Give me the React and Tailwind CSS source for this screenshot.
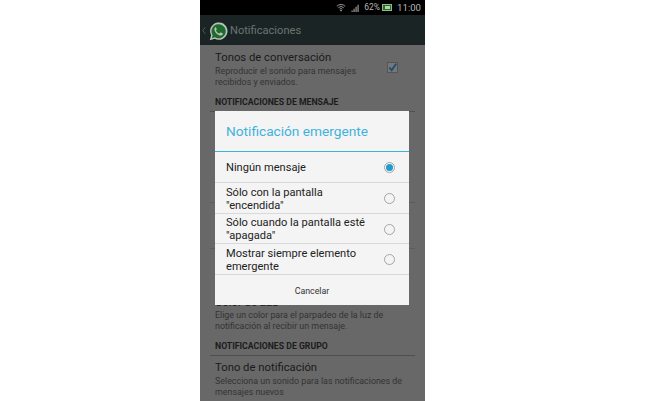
import React from "react";

const font = { fontFamily: "Roboto, sans-serif" };

const options = [
  { label: ["Ningún mensaje"], checked: true, h: "h-[31px]" },
  { label: ["Sólo con la pantalla", "\"encendida\""], h: "h-[31px] pt-[1px]" },
  { label: ["Sólo cuando la pantalla esté", "\"apagada\""], h: "h-[30px] pt-[1px]" },
  { label: ["Mostrar siempre elemento", "emergente"], h: "h-[31px] pt-[1px]" },
];

const Radio = ({ checked }) => (
  <span className="flex h-[11px] w-[11px] shrink-0 items-center justify-center rounded-full border border-[#a5a5a5] bg-[#f4f4f4]">
    {checked && <span className="h-[7px] w-[7px] rounded-full bg-[#1f9bd1]" />}
  </span>
);

const Logo = () => (
  <svg viewBox="0 0 24 24" className="h-[19px] w-[19px] shrink-0">
    <path d="M1 23l1.7-6.2A11 11 0 1 1 7.1 21.2z" fill="#b9c4b9" />
    <path d="M3.6 20.4l1-3.8A9 9 0 1 1 7.5 19.4z" fill="#1f6a2e" />
    <path d="M8.2 6.7c-.6.2-1.4 1.2-1.4 2.4 0 3.4 4.4 8 8.3 8 1.2 0 2.2-1 2.3-1.8.1-.5 0-.8-.3-1l-2.2-1.1c-.3-.1-.5 0-.7.2l-.9 1.1c-.2.2-.4.2-.7.1-1.4-.6-3-2-3.7-3.5-.1-.2-.1-.4.1-.6l.7-.9c.1-.2.2-.4.1-.6l-1-2.3c-.1-.3-.6-.2-.8 0z" fill="#b9c4b9" />
  </svg>
);

const Section = ({ children }) => (
  <div className="mx-[10px] border-b border-[#4f4f4f] px-[5px] pb-[3px] text-[8.7px] font-bold leading-[11px] text-[#1c1c1c]">
    {children}
  </div>
);

export default function App() {
  return (
    <div className="flex h-[401px] w-[664px] overflow-hidden bg-white pl-[200px]" style={font}>
      <div className="relative flex h-full w-[225px] flex-col overflow-hidden bg-[#686868]">
        {/* status bar */}
        <div className="flex h-[15px] shrink-0 items-center justify-end gap-[2px] bg-black pr-[4px] text-[#b5b5b5]">
          <svg viewBox="0 0 12 10" className="h-[9px] w-[10px]">
            <path d="M1 3.5a7 7 0 0 1 10 0M2.8 5.3a4.5 4.5 0 0 1 6.4 0M4.5 7a2 2 0 0 1 3 0" fill="none" stroke="#b5b5b5" strokeWidth="1" />
            <circle cx="6" cy="8.7" r="1" fill="#b5b5b5" />
          </svg>
          <svg viewBox="0 0 10 10" className="ml-[3px] h-[8px] w-[9px]">
            <path d="M0 8h1.5v2H0zM2.5 6H4v4H2.5zM5 3.5h1.5V10H5zM7.5 1H9v9H7.5z" fill="#9a9a9a" />
          </svg>
          <span className="ml-[2px] text-[8.5px] leading-none">62%</span>
          <span className="flex h-[7px] w-[10px] items-center justify-center border border-[#8fb98f] bg-[#2d6b2d]">
            <span className="h-[3px] w-[5px] bg-[#a9d8a0]" />
          </span>
          <span className="ml-[3px] text-[9.6px] leading-none">11:00</span>
        </div>

        {/* action bar */}
        <div className="flex h-[30px] shrink-0 items-center bg-[#1a2424] pl-[2px]">
          <svg viewBox="0 0 5 10" className="h-[9px] w-[4px]">
            <path d="M4 1L1 5l3 4" fill="none" stroke="#5a6666" strokeWidth="1" />
          </svg>
          <span className="ml-[3px] mt-[2px] flex"><Logo /></span>
          <span className="ml-[2px] mt-[2px] text-[11.1px] leading-none text-[#6b7474]">Notificaciones</span>
        </div>

        {/* settings list */}
        <div className="flex min-h-0 flex-1 flex-col">
          <div className="flex items-start justify-between pl-[15px] pr-[27px] pt-[5px]">
            <div>
              <div className="text-[11.3px] leading-[15px] text-[#1a1a1a]">Tonos de conversación</div>
              <div className="mt-[1px] text-[8.9px] leading-[11px] text-[#333]">
                Reproducir el sonido para mensajes
                <br />
                recibidos y enviados.
              </div>
            </div>
            <span className="mt-[12px] flex h-[11px] w-[11px] items-center justify-center border border-[#555] bg-[#777]">
              <svg viewBox="0 0 12 12" className="h-[11px] w-[11px] overflow-visible">
                <path d="M2.5 6l2.5 3 5-7" fill="none" stroke="#174f73" strokeWidth="2" />
              </svg>
            </span>
          </div>
          <div className="mt-[9px]">
            <Section>NOTIFICACIONES DE MENSAJE</Section>
          </div>
          {/* rows hidden behind the dialog, only their dividers show */}
          <div className="mx-[10px] h-[91px] shrink-0 border-b border-[#5c5c5c]" />
          <div className="mx-[10px] h-[46px] shrink-0 border-b border-[#5c5c5c]" />
          <div className="h-[46px] shrink-0" />
          <div className="pl-[15px] text-[11.3px] leading-[15px] text-[#1a1a1a]">Color de LED</div>
          <div className="pl-[15px] text-[8.9px] leading-[10.5px] text-[#333]">
            Elige un color para el parpadeo de la luz de
            <br />
            notificación al recibir un mensaje.
          </div>
          <div className="mt-[10px]">
            <Section>NOTIFICACIONES DE GRUPO</Section>
          </div>
          <div className="pl-[15px] pt-[4px]">
            <div className="text-[11.3px] leading-[15px] text-[#1a1a1a]">Tono de notificación</div>
            <div className="mt-[1px] text-[8.9px] leading-[11px] text-[#333]">
              Selecciona un sonido para las notificaciones de
              <br />
              mensajes nuevos
            </div>
          </div>
        </div>

        {/* dialog */}
        <div className="absolute left-[15px] top-[111px] flex w-[194px] flex-col bg-[#f4f4f4]">
          <div className="flex h-[41px] items-center border-b border-[#3fb2dc] pl-[11px] pt-[1px] text-[13.7px] leading-none text-[#3fb2dc]">
            Notificación emergente
          </div>
          {options.map((o, i) => (
            <div key={i} className={`flex ${o.h} items-center justify-between border-b border-[#d9d9d9] pl-[11px] pr-[14px]`}>
              <div className="text-[11.1px] leading-[13px] text-[#222]">
                {o.label.map((l) => (
                  <div key={l}>{l}</div>
                ))}
              </div>
              <Radio checked={o.checked} />
            </div>
          ))}
          <div className="flex h-[30px] items-center justify-center pt-[3px] text-[8.8px] text-[#333]">Cancelar</div>
        </div>
      </div>
    </div>
  );
}
